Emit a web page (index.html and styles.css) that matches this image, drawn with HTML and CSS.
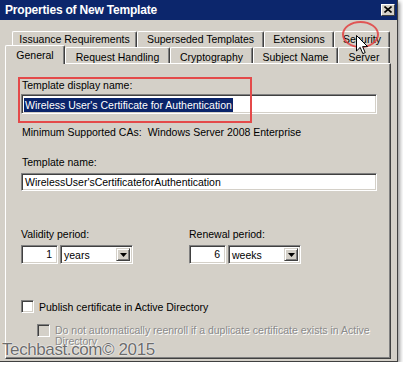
FILE: index.html
```html
<!DOCTYPE html>
<html>
<head>
<meta charset="utf-8">
<link rel="stylesheet" href="styles.css">
</head>
<body>
<div class="window">
  <div class="titlebar">
    <span class="title">Properties of New Template</span>
    <span class="close"><svg width="8" height="7" viewBox="0 0 8 7"><path d="M0.5 0.5 L7.5 6.5 M7.5 0.5 L0.5 6.5" stroke="#000" stroke-width="1.6"/></svg></span>
  </div>
  <div class="tabs">
    <div class="tabrow back">
      <div class="tab t-issuance">Issuance Requirements</div>
      <div class="tab t-superseded">Superseded Templates</div>
      <div class="tab t-extensions">Extensions</div>
      <div class="tab t-security">Security</div>
    </div>
    <div class="tabrow front">
      <div class="tab t-general selected">General</div>
      <div class="tab t-request">Request Handling</div>
      <div class="tab t-crypto">Cryptography</div>
      <div class="tab t-subject">Subject Name</div>
      <div class="tab t-server">Server</div>
    </div>
  </div>
  <div class="panel">
    <div class="label first">Template display name:</div>
    <div class="field focused"><span class="selection">Wireless User's Certificate for Authentication</span></div>
    <div class="info">Minimum Supported CAs:<span class="info-value">Windows Server 2008 Enterprise</span></div>
    <div class="label second">Template name:</div>
    <div class="field plain">WirelessUser'sCertificateforAuthentication</div>
    <div class="periods">
      <div class="period">
        <div class="label">Validity period:</div>
        <div class="spin">
          <div class="number">1</div>
          <div class="combo"><span class="combo-text">years</span><span class="drop"><svg width="7" height="4" viewBox="0 0 7 4"><path d="M0 0 H7 L3.5 4 Z" fill="#000"/></svg></span></div>
        </div>
      </div>
      <div class="period">
        <div class="label">Renewal period:</div>
        <div class="spin">
          <div class="number">6</div>
          <div class="combo"><span class="combo-text">weeks</span><span class="drop"><svg width="7" height="4" viewBox="0 0 7 4"><path d="M0 0 H7 L3.5 4 Z" fill="#000"/></svg></span></div>
        </div>
      </div>
    </div>
    <div class="check">
      <span class="box"></span>
      <span class="check-label">Publish certificate in Active Directory</span>
    </div>
    <div class="check sub disabled">
      <span class="box"></span>
      <span class="check-label">Do not automatically reenroll if a duplicate certificate exists in Active Directory</span>
    </div>
  </div>
  <div class="mark-box"></div>
  <div class="mark-ring"></div>
  <svg class="pointer" width="13" height="20" viewBox="0 0 13 20"><path d="M0.5 0.5 L0.5 16 L4.2 12.4 L6.8 18.6 L9.2 17.6 L6.6 11.6 L11.6 11.6 Z" fill="#fff" stroke="#000" stroke-width="1" stroke-linejoin="miter"/></svg>
  <div class="watermark">Techbast.com© 2015</div>
</div>
</body>
</html>
```

FILE: styles.css
```css
html, body {
  margin: 0;
  padding: 0;
  background: #ffffff;
}

body {
  font-family: "Liberation Sans", Arial, sans-serif;
  font-size: 10.5px;
  line-height: 13px;
  color: #000;
}

.window {
  position: relative;
  width: 397px;
  height: 361px;
  background: #d4d0c8;
  border-right: 1px solid #404040;
  border-bottom: 1px solid #404040;
  box-shadow: 2px 2px 4px rgba(0, 0, 0, 0.4);
  display: flex;
  flex-direction: column;
  overflow: hidden;
}

.titlebar {
  height: 20px;
  background: #0c266c;
  display: flex;
  align-items: center;
  justify-content: space-between;
  padding-left: 5px;
  padding-right: 2px;
}

.title {
  color: #fff;
  font-weight: bold;
  font-size: 12px;
  letter-spacing: -0.2px;
  line-height: 20px;
}

.close {
  width: 14px;
  height: 12px;
  box-sizing: border-box;
  background: #d4d0c8;
  border-top: 1px solid #fff;
  border-left: 1px solid #fff;
  border-right: 1px solid #404040;
  border-bottom: 1px solid #404040;
  display: flex;
  align-items: center;
  justify-content: center;
  margin-top: -1px;
}

.tabs {
  padding-top: 11px;
}

.tabrow {
  display: flex;
  height: 16px;
}

.tabrow.back {
  padding-left: 12px;
}

.tabrow.front {
  padding-left: 5px;
}

.tab {
  box-sizing: border-box;
  height: 16px;
  border-top: 1px solid #fff;
  border-left: 1px solid #fff;
  border-right: 1px solid #404040;
  box-shadow: inset -1px 0 0 #808080;
  border-radius: 2px 2px 0 0;
  text-align: center;
  white-space: nowrap;
}

.back .tab {
  padding-top: 1px;
}

.front .tab {
  padding-top: 3px;
}

.tab.selected {
  position: relative;
  z-index: 1;
  height: 19px;
  margin-top: -2px;
  background: #d4d0c8;
}

.t-issuance { width: 125px; }
.t-superseded { width: 127px; }
.t-extensions { width: 70px; }
.t-security { width: 56px; }
.t-general { width: 60px; }
.t-request { width: 105px; }
.t-crypto { width: 83px; }
.t-subject { width: 85px; }
.t-server { width: 52px; }

.panel {
  flex: 1;
  margin-left: 5px;
  margin-bottom: 2px;
  width: 386px;
  box-sizing: border-box;
  border-top: 1px solid #fff;
  border-left: 1px solid #fff;
  border-right: 1px solid #404040;
  border-bottom: 1px solid #404040;
  box-shadow: inset -1px -1px 0 #808080;
  padding: 15px 13px 0 15px;
  display: flex;
  flex-direction: column;
  align-items: flex-start;
}

.label {
  padding-left: 1px;
  white-space: nowrap;
}

.label.second {
  margin-top: 17px;
}

.field {
  box-sizing: border-box;
  width: 356px;
  background: #fff;
  border-top: 1px solid #808080;
  border-left: 1px solid #808080;
  border-right: 1px solid #fff;
  border-bottom: 1px solid #fff;
  box-shadow: inset 1px 1px 0 #404040, inset -1px -1px 0 #d4d0c8;
  white-space: nowrap;
}

.field.focused {
  height: 20px;
  margin-top: 2px;
  padding: 3px 0 0 2px;
}

.selection {
  display: inline-block;
  background: #0a246a;
  color: #fff;
  padding: 0 1px;
  line-height: 14px;
}

.field.plain {
  height: 18px;
  margin-top: 4px;
  padding: 2px 0 0 3px;
}

.info {
  margin-top: 12px;
  padding-left: 1px;
  white-space: nowrap;
}

.info-value {
  margin-left: 6px;
}

.periods {
  margin-top: 37px;
  display: grid;
  grid-template-columns: 168px auto;
}

.period .label {
  padding-left: 0;
}

.spin {
  margin-top: 4px;
  display: flex;
  gap: 2px;
}

.number,
.combo {
  box-sizing: border-box;
  height: 19px;
  background: #fff;
  border-top: 1px solid #808080;
  border-left: 1px solid #808080;
  border-right: 1px solid #fff;
  border-bottom: 1px solid #fff;
  box-shadow: inset 1px 1px 0 #404040, inset -1px -1px 0 #d4d0c8;
}

.number {
  width: 37px;
  text-align: right;
  padding: 2px 5px 0 0;
}

.combo {
  width: 73px;
  display: flex;
  align-items: stretch;
  justify-content: space-between;
  padding: 2px 2px 2px 3px;
}

.combo-text {
  line-height: 14px;
}

.drop {
  width: 14px;
  box-sizing: border-box;
  background: #d4d0c8;
  border-top: 1px solid #d4d0c8;
  border-left: 1px solid #d4d0c8;
  border-right: 1px solid #404040;
  border-bottom: 1px solid #404040;
  box-shadow: inset 1px 1px 0 #fff, inset -1px -1px 0 #808080;
  display: flex;
  align-items: center;
  justify-content: center;
}

.check {
  margin-top: 36px;
  display: flex;
  align-items: flex-start;
  gap: 5px;
}

.box {
  flex: none;
  width: 13px;
  height: 13px;
  box-sizing: border-box;
  background: #fff;
  border-top: 1px solid #808080;
  border-left: 1px solid #808080;
  border-right: 1px solid #fff;
  border-bottom: 1px solid #fff;
  box-shadow: inset 1px 1px 0 #404040, inset -1px -1px 0 #d4d0c8;
}

.check-label {
  padding-top: 1px;
}

.check.sub {
  margin-top: 10px;
  margin-left: 16px;
  gap: 5px;
  width: 342px;
}

.check.sub .check-label {
  line-height: 11px;
  padding-top: 1px;
}

.check.disabled .box {
  background: #d4d0c8;
}

.check.disabled .check-label {
  color: #8a8a8a;
  text-shadow: 1px 1px 0 #fff;
}

.mark-box {
  position: absolute;
  left: 18px;
  top: 77px;
  width: 234px;
  height: 46px;
  box-sizing: border-box;
  border: 2px solid #e44a4a;
}

.mark-ring {
  position: absolute;
  left: 342px;
  top: 21px;
  width: 37px;
  height: 27px;
  box-sizing: border-box;
  border: 2px solid rgba(226, 64, 64, 0.85);
  border-radius: 50%;
}

.pointer {
  position: absolute;
  left: 356px;
  top: 35px;
}

.watermark {
  position: absolute;
  left: 2px;
  top: 341px;
  font-size: 17px;
  line-height: 18px;
  letter-spacing: -0.4px;
  color: #6c6c6c;
  text-shadow: 0 0 2px #fff, 0 0 1px #fff;
  white-space: nowrap;
}
```
